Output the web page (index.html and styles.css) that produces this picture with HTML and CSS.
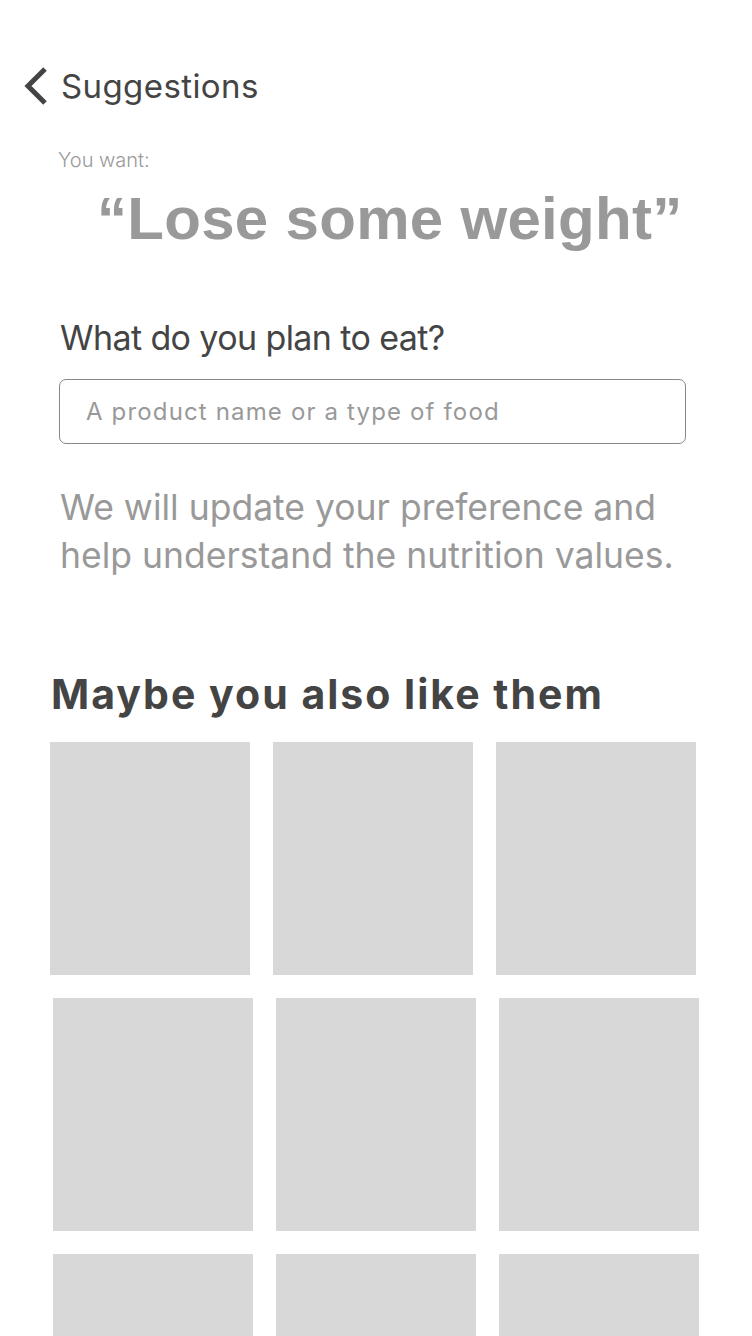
FILE: index.html
```html
<!DOCTYPE html>
<html>
<head>
<meta charset="utf-8">
<link rel="stylesheet" href="styles.css">
</head>
<body>
<div class="page">
  <header class="nav">
    <svg class="back" width="26" height="40" viewBox="0 0 26 40"><path d="M22 3 L5 20 L22 37" fill="none" stroke="#444" stroke-width="5"/></svg>
    <span class="nav-title">Suggestions</span>
  </header>
  <div class="want-label">You want:</div>
  <h1 class="goal">“Lose some weight”</h1>
  <h2 class="question">What do you plan to eat?</h2>
  <div class="input">A product name or a type of food</div>
  <p class="note">We will update your preference and help understand the nutrition values.</p>
  <h2 class="section">Maybe you also like them</h2>
  <div class="grid first">
    <div class="tile"></div><div class="tile"></div><div class="tile"></div>
  </div>
  <div class="grid shifted">
    <div class="tile"></div><div class="tile"></div><div class="tile"></div>
  </div>
  <div class="grid shifted">
    <div class="tile"></div><div class="tile"></div><div class="tile"></div>
  </div>
</div>
</body>
</html>
```
FILE: styles.css
```css
html, body { margin: 0; padding: 0; background: #fff; }
body { font-family: Inter, Roboto, "Liberation Sans", sans-serif; overflow: hidden; height: 1336px; }
.page { padding-top: 66px; }
.nav { display: flex; align-items: center; padding-left: 23px; gap: 12px; height: 40px; }
.back { display: block; }
.nav-title { font-size: 33px; color: #444; font-weight: 400; letter-spacing: 0.4px; }
.want-label { margin: 40px 0 0 58px; font-size: 20px; font-weight: 300; color: #999; letter-spacing: 0; line-height: 28px; }
.goal { margin: 12px 0 0 97px; font-family: "Liberation Sans", Arial, sans-serif; font-size: 60px; font-weight: 700; color: #999; line-height: 66px; letter-spacing: 0.3px; }
.question { margin: 62px 0 0 60px; font-size: 34px; font-weight: 400; color: #444; letter-spacing: -0.6px; line-height: 48px; }
.input { margin: 17px 0 0 59px; width: 627px; height: 65px; box-sizing: border-box; border: 1px solid #888; border-radius: 7px; padding-left: 26px; display: flex; align-items: center; font-size: 24px; color: #999; letter-spacing: 1.15px; }
.note { margin: 40px 0 0 60px; width: 640px; font-size: 35.5px; color: #999; line-height: 48px; letter-spacing: 0; }
.section { margin: 88px 0 0 51px; font-size: 41px; font-weight: 700; color: #444; line-height: 52px; letter-spacing: 2px; }
.grid { display: flex; gap: 23px; }
.grid.first { margin: 22px 0 0 50px; }
.grid.shifted { margin: 23px 0 0 53px; }
.tile { width: 200px; height: 233px; background: #d8d8d8; }
```
